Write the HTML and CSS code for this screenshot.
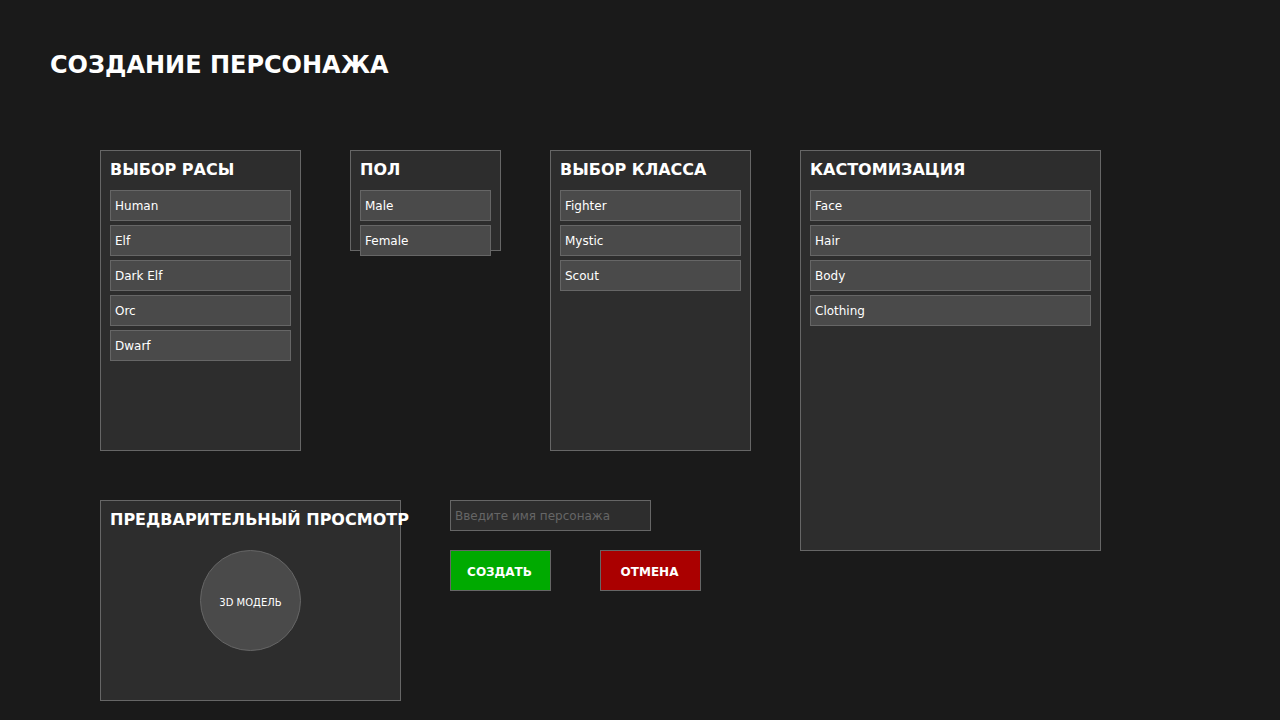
FILE: index.html
```html
<!DOCTYPE html>
<html lang="ru">
<head>
  <meta charset="utf-8">
  <meta name="viewport" content="width=device-width, initial-scale=1">
  <title>Создание персонажа</title>
  <link rel="stylesheet" href="styles.css">
</head>
<body>
  <header class="page-header">
    <h1 class="page-title">СОЗДАНИЕ ПЕРСОНАЖА</h1>
  </header>
  <main class="layout">
    <div class="main-column">
      <div class="choices">
        <section class="panel panel-medium">
          <h2 class="panel-title">ВЫБОР РАСЫ</h2>
          <div class="options">
            <button type="button" class="option">Human</button>
            <button type="button" class="option">Elf</button>
            <button type="button" class="option">Dark Elf</button>
            <button type="button" class="option">Orc</button>
            <button type="button" class="option">Dwarf</button>
          </div>
        </section>
        <section class="panel panel-short">
          <h2 class="panel-title">ПОЛ</h2>
          <div class="options">
            <button type="button" class="option">Male</button>
            <button type="button" class="option">Female</button>
          </div>
        </section>
        <section class="panel panel-medium">
          <h2 class="panel-title">ВЫБОР КЛАССА</h2>
          <div class="options">
            <button type="button" class="option">Fighter</button>
            <button type="button" class="option">Mystic</button>
            <button type="button" class="option">Scout</button>
          </div>
        </section>
      </div>
      <div class="details">
        <section class="panel panel-preview">
          <h2 class="panel-title">ПРЕДВАРИТЕЛЬНЫЙ ПРОСМОТР</h2>
          <div class="model">3D МОДЕЛЬ</div>
        </section>
        <form class="create-form">
          <input class="name-input" type="text" aria-label="Имя персонажа" placeholder="Введите имя персонажа">
          <div class="actions">
            <button type="button" class="action action-create">СОЗДАТЬ</button>
            <button type="button" class="action action-cancel">ОТМЕНА</button>
          </div>
        </form>
      </div>
    </div>
    <section class="panel panel-tall">
      <h2 class="panel-title">КАСТОМИЗАЦИЯ</h2>
      <div class="options">
        <button type="button" class="option">Face</button>
        <button type="button" class="option">Hair</button>
        <button type="button" class="option">Body</button>
        <button type="button" class="option">Clothing</button>
      </div>
    </section>
  </main>
</body>
</html>
```

FILE: styles.css
```css
* {
  box-sizing: border-box;
}

body {
  margin: 0;
  background: #1a1a1a;
  color: #fff;
  font-family: "DejaVu Sans", sans-serif;
  font-size: 12px;
}

button,
input {
  margin: 0;
  border: 1px solid #666;
  border-radius: 0;
  color: #fff;
  font: inherit;
}

button {
  cursor: pointer;
}

.page-header {
  padding: 50px 50px 70px;
}

.page-title {
  margin: 0;
  font-size: 24px;
  line-height: 30px;
}

.layout {
  display: grid;
  grid-template-columns: 651fr 301fr;
  align-items: start;
  gap: 49px;
  padding: 0 179px 19px 100px;
}

.main-column {
  display: grid;
  gap: 49px;
}

.choices {
  display: grid;
  grid-template-columns: 201fr 151fr 201fr;
  align-items: start;
  gap: 49px;
}

.details {
  display: grid;
  grid-template-columns: minmax(0, 1fr) minmax(0, 1fr);
  align-items: start;
  gap: 49px;
}

.panel {
  padding: 9px;
  border: 1px solid #666;
  background: #2d2d2d;
}

.panel-medium {
  min-height: 301px;
}

/* The last option hangs over the lower border. */
.panel-short {
  height: 101px;
}

.panel-tall {
  min-height: 401px;
}

.panel-preview {
  min-height: 201px;
}

.panel-title {
  margin: 0 0 11px;
  font-size: 16px;
  line-height: 19px;
  white-space: nowrap;
}

.options {
  display: grid;
  gap: 4px;
}

.option {
  min-height: 31px;
  padding: 0 4px;
  background: #4a4a4a;
  text-align: left;
}

.model {
  display: flex;
  align-items: center;
  justify-content: center;
  width: 101px;
  height: 101px;
  margin: 21px auto 0;
  padding-top: 3px;
  border: 1px solid #666;
  border-radius: 50%;
  background: #4a4a4a;
  font-size: 10px;
}

.create-form {
  display: grid;
  gap: 19px;
}

.name-input {
  width: 201px;
  max-width: 100%;
  height: 31px;
  padding: 0 4px;
  background: #2d2d2d;
}

.name-input::placeholder {
  color: #666;
  opacity: 1;
}

.actions {
  display: flex;
  gap: 49px;
}

.action {
  min-width: 101px;
  min-height: 41px;
  padding: 2px 6px 0 4px;
  font-weight: bold;
}

.action-create {
  background: #0a0;
}

.action-cancel {
  background: #a00;
}
```
